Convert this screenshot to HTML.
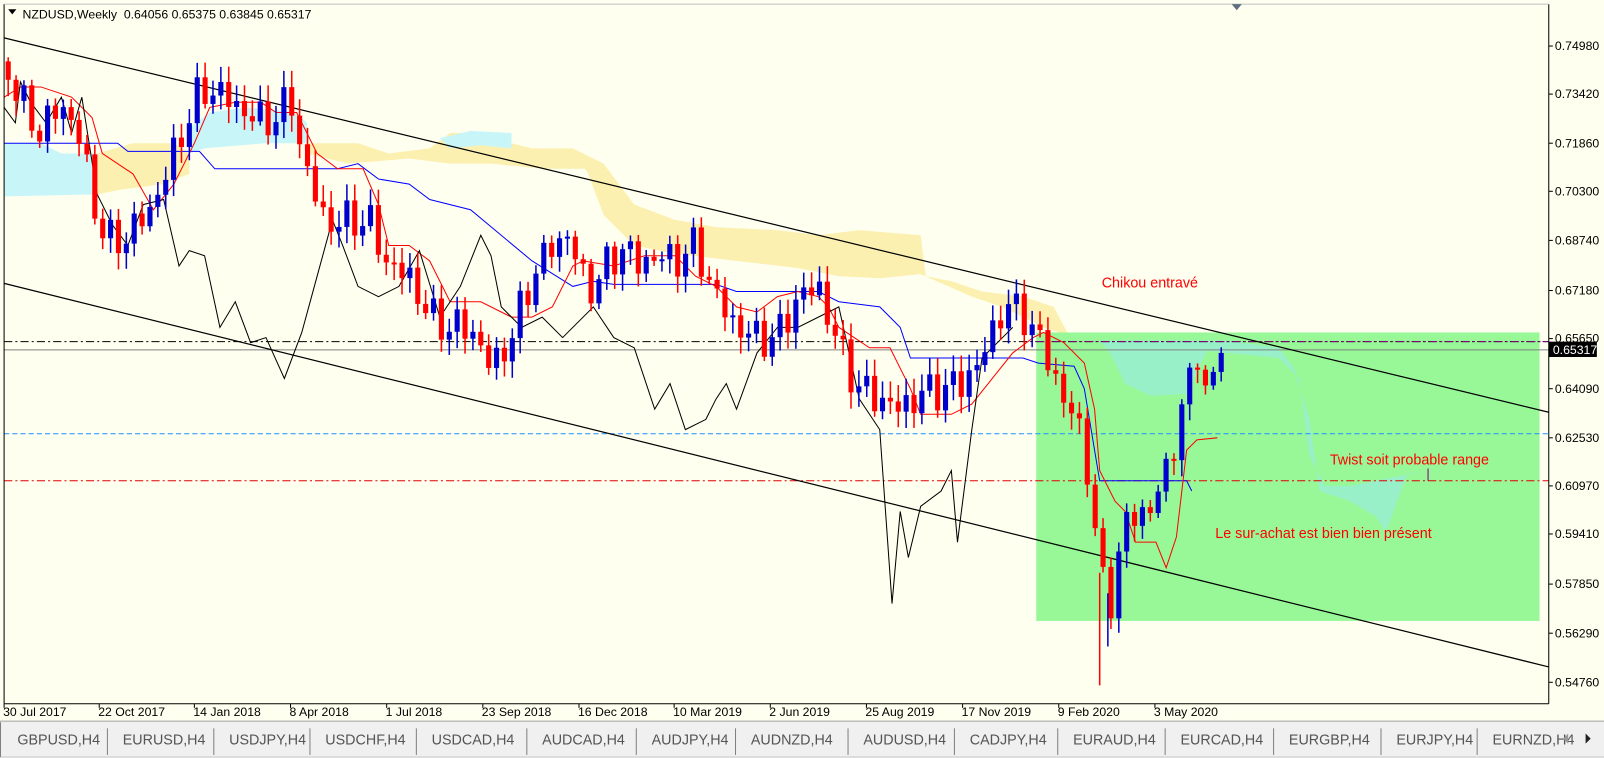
<!DOCTYPE html>
<html><head><meta charset="utf-8"><meta name="viewport" content="width=1604"><style>
body{margin:0;padding:0;background:#fffff0;font-family:"Liberation Sans",sans-serif}
#wrap{position:relative;width:1604px;height:758px;overflow:hidden;background:#f0f0f0}
svg{position:absolute;left:0;top:0;display:block}
</style></head><body><div id="wrap">
<svg id="s" width="1604" height="758" viewBox="0 0 1568 741" preserveAspectRatio="none" xmlns="http://www.w3.org/2000/svg" font-family="Liberation Sans, sans-serif">
<rect x="0" y="0" width="1568" height="741" fill="#fffff0"/>
<g id="cloud">
<polygon points="4,140 40,140 60,150 95,150 95,190 4,192" fill="#c8f6f8"/>
<polygon points="95,150 130,140 170,140 185,150 185,170 160,180 120,185 95,190" fill="#fbf0b0"/>
<polygon points="185,125 205,110 240,105 290,110 300,120 300,140 260,140 200,145 185,150" fill="#c8f6f8"/>
<polygon points="300,140 350,140 380,150 420,145 440,130 480,130 500,140 520,145 560,145 575,155 575,165 530,165 480,160 440,160 400,155 340,160 300,150" fill="#fbf0b0"/>
<polygon points="430,135 460,128 500,130 500,145 470,142 440,145" fill="#c8f6f8"/>
<polygon points="560,145 590,160 620,200 660,215 700,222 760,225 800,230 840,225 900,230 905,270 930,275 960,285 1000,290 1030,300 1045,328 1020,320 980,300 950,290 900,268 860,272 820,270 780,262 720,255 660,248 620,240 590,210 575,170" fill="#fbf0b0"/>
</g>
<rect x="1013" y="325" width="492" height="282" fill="#98f898"/>
<polygon points="1075,333 1200,333 1250,340 1265,360 1280,410 1290,480 1320,490 1345,505 1355,520 1375,465 1395,460 1320,475 1295,475 1280,445 1270,370 1250,350 1180,343 1160,385 1125,387 1100,375 1085,345" fill="#98f0c8"/>
<line x1="4" y1="334" x2="1514" y2="334" stroke="#000" stroke-dasharray="8,3,2,3"/>
<line x1="1013" y1="334" x2="1514" y2="334" stroke="#800080" stroke-dasharray="8,3,2,3"/>
<line x1="4" y1="342" x2="1514" y2="342" stroke="#808080"/>
<line x1="4" y1="424" x2="1514" y2="424" stroke="#1e90ff" stroke-dasharray="5,3"/>
<line x1="4" y1="470" x2="1514" y2="470" stroke="#e00000" stroke-dasharray="8,3,2,3"/>
<line x1="4" y1="37" x2="1514" y2="403" stroke="#000" stroke-width="1.2"/>
<line x1="4" y1="277" x2="1514" y2="652" stroke="#000" stroke-width="1.2"/>
<polyline fill="none" stroke="#0000ff" stroke-width="1" points="4,140 115,140 125,148 195,148 210,165 300,165 330,165 350,160 370,175 400,180 420,195 460,205 520,255 560,280 580,275 600,278 700,278 720,285 760,285 800,285 820,295 860,300 880,320 890,350 960,350 1000,350 1015,355 1050,358 1060,380 1075,470 1160,470 1165,480"/>
<polyline fill="none" stroke="#ff0000" stroke-width="1" points="4,95 20,85 40,85 70,95 90,115 100,150 115,160 130,170 150,205 170,180 190,140 205,105 230,100 255,100 270,110 290,110 310,150 330,165 355,165 370,200 380,240 400,240 420,255 440,295 470,295 500,310 520,310 540,300 560,260 570,255 600,260 630,250 660,250 680,270 700,280 720,300 740,305 760,290 780,285 800,290 810,300 820,320 850,340 870,340 890,380 900,405 930,405 950,395 970,370 990,345 1010,330 1020,325 1040,335 1060,355 1070,400 1075,460 1090,490 1100,500 1110,530 1130,530 1140,555 1150,525 1160,440 1170,430 1190,428"/>
<polyline fill="none" stroke="#000" stroke-width="1" points="4,105 15,120 20,80 30,100 45,120 60,95 70,130 80,95 95,190 110,220 125,240 140,200 160,195 175,260 185,245 200,250 215,320 230,295 245,335 260,330 278,370 295,325 310,270 325,215 335,240 350,280 370,290 390,280 410,245 430,310 450,280 470,230 480,250 490,300 510,320 530,310 550,330 580,300 600,330 620,340 640,400 655,375 670,420 690,410 700,390 710,375 720,400 740,345 760,320 780,320 800,310 820,300 840,390 860,420 872,590 880,500 888,545 900,495 920,480 930,460 936,530 950,420 960,350 980,330 990,320"/>
<g id="candles"></g>
<line x1="4" y1="4" x2="4" y2="688" stroke="#000"/>
<line x1="4" y1="688" x2="1514" y2="688" stroke="#000"/>
<line x1="1514" y1="4" x2="1514" y2="688" stroke="#000"/>
<line x1="4" y1="4" x2="1514" y2="4" stroke="#c0c0c0"/>
<polygon points="1204,4 1214,4 1209,10" fill="#607080"/>
<g id="axis" font-size="12" fill="#000"></g>
<rect x="1514" y="334" width="47" height="15" fill="#000"/>
<text x="1518" y="346" font-size="12" fill="#fff">0.65317</text>
<text x="22" y="18" font-size="12" fill="#000" xml:space="preserve">NZDUSD,Weekly  0.64056 0.65375 0.63845 0.65317</text>
<polygon points="8,9 16,9 12,14" fill="#000"/>
<g font-size="14" fill="#ff0000">
<text x="1077" y="281">Chikou entravé</text>
<text x="1300" y="454">Twist soit probable range</text>
<text x="1188" y="526">Le sur-achat est bien bien présent</text>
</g>
<line x1="1396" y1="458" x2="1396" y2="470" stroke="#800080"/>
<rect x="0" y="705" width="1568" height="40" fill="#f0f0f0"/>
<line x1="0" y1="705" x2="1568" y2="705" stroke="#a0a0a0"/>
<line x1="0" y1="740" x2="1568" y2="740" stroke="#c8c8c8"/>
<line x1="0.5" y1="706" x2="0.5" y2="740" stroke="#808080"/>
<g id="tabs" font-size="14" fill="#555"></g>
<polygon points="1528,722 1533,717 1533,727" fill="#999"/>
<polygon points="1550,717 1555,722 1550,727" fill="#222"/>
</svg>
</div>
<script>
(function(){
var NS="http://www.w3.org/2000/svg";
function el(p,t,a,txt){var e=document.createElementNS(NS,t);for(var k in a)e.setAttribute(k,a[k]);if(txt)e.textContent=txt;p.appendChild(e);return e;}
var kp=[[4,60],[20,100],[40,130],[60,100],[80,140],[95,215],[110,240],[130,225],[150,200],[170,150],[190,100],[205,85],[220,95],[240,110],[260,120],[285,100],[300,170],[320,220],[340,215],[360,215],[380,260],[400,270],[420,310],[440,320],[460,320],[480,360],[500,330],[520,270],[540,240],[555,230],[575,285],[590,265],[610,240],[625,260],[640,250],[660,255],[680,240],[700,290],[720,320],[740,330],[760,330],[780,290],[800,280],[820,340],[840,380],[860,390],[880,400],[900,385],[920,380],[940,375],[960,350],[980,300],[1000,305],[1020,340],[1040,390],[1060,430],[1075,560],[1085,590],[1100,510],[1120,500],[1135,480],[1150,420],[1165,350],[1180,380],[1193,345]];
function f(x){for(var i=0;i<kp.length-1;i++){if(x>=kp[i][0]&&x<=kp[i+1][0]){var t=(x-kp[i][0])/(kp[i+1][0]-kp[i][0]);return kp[i][1]+t*(kp[i+1][1]-kp[i][1]);}}return kp[kp.length-1][1];}
var g=document.getElementById("candles");var prev=f(4);
for(var i=0;i<=154;i++){var x=8+i*7.7;if(x>1196)break;var c=f(x)+Math.sin(i*2.3)*14+Math.cos(i*1.7)*8;if(x>1150)c=f(x);
var o=prev;var bt=Math.min(o,c),bb=Math.max(o,c);if(bb-bt<2)bb=bt+2;
var col=c>o?"#ff0000":"#0000cc";var hi=bt-4-Math.abs(Math.sin(i*3.1))*12,lo=bb+4+Math.abs(Math.cos(i*2.7))*12;
el(g,"line",{x1:x,y1:hi,x2:x,y2:lo,stroke:col,"stroke-width":1.5});
el(g,"rect",{x:x-2.5,y:bt,width:5,height:bb-bt,fill:col});prev=c;}
el(g,"line",{x1:1075,y1:560,x2:1075,y2:670,stroke:"#ff0000","stroke-width":1.5});
el(g,"line",{x1:1083,y1:580,x2:1083,y2:632,stroke:"#0000cc","stroke-width":1.5});
var ax=document.getElementById("axis");
var lab=[["0.74980",45],["0.73420",92],["0.71860",140],["0.70300",187],["0.68740",235],["0.67180",284],["0.65650",331],["0.64090",380],["0.62530",428],["0.60970",475],["0.59410",522],["0.57850",571],["0.56290",619],["0.54760",667]];
lab.forEach(function(l){el(ax,"line",{x1:1514,y1:l[1],x2:1518,y2:l[1],stroke:"#000"});el(ax,"text",{x:1520,y:l[1]+4},l[0]);});
var d=[["30 Jul 2017",4],["22 Oct 2017",97],["14 Jan 2018",190],["8 Apr 2018",284],["1 Jul 2018",378],["23 Sep 2018",472],["16 Dec 2018",566],["10 Mar 2019",659],["2 Jun 2019",753],["25 Aug 2019",847],["17 Nov 2019",941],["9 Feb 2020",1035],["3 May 2020",1129]];
d.forEach(function(l){el(ax,"line",{x1:l[1],y1:688,x2:l[1],y2:692,stroke:"#000"});el(ax,"text",{x:l[1]-1,y:700},l[0]);});
var tb=document.getElementById("tabs");
var t=["GBPUSD,H4","EURUSD,H4","USDJPY,H4","USDCHF,H4","USDCAD,H4","AUDCAD,H4","AUDJPY,H4","AUDNZD,H4","AUDUSD,H4","CADJPY,H4","EURAUD,H4","EURCAD,H4","EURGBP,H4","EURJPY,H4","EURNZD,H4"];
var xs=[17,120,224,318,422,530,637,734,844,948,1049,1154,1260,1365,1459];
t.forEach(function(s,i){el(tb,"text",{x:xs[i],y:728},s);if(i<14)el(tb,"line",{x1:xs[i+1]-15,y1:712,x2:xs[i+1]-15,y2:738,stroke:"#808080"});});
})();
</script>
</body></html>
